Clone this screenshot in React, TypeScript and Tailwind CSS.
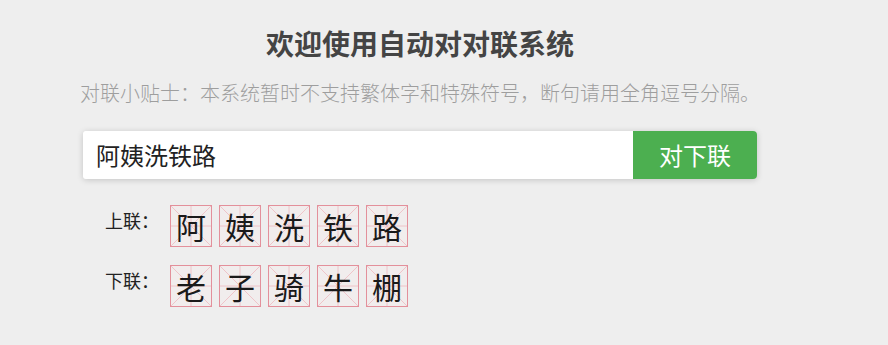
import React from "react";

const FONT = '"Noto Sans CJK SC", "Noto Sans", sans-serif';

function Cell({ ch }: { ch: string }) {
  return (
    <div className="relative flex h-[42px] w-[42px] items-center justify-center border border-[#e3909b] bg-[#f1eded]">
      <svg className="absolute inset-0 h-full w-full" viewBox="0 0 40 40" preserveAspectRatio="none">
        <line x1="0" y1="0" x2="40" y2="40" stroke="#eec0c5" strokeWidth="0.9" />
        <line x1="40" y1="0" x2="0" y2="40" stroke="#eec0c5" strokeWidth="0.9" />
        <line x1="20" y1="0" x2="20" y2="40" stroke="#eec0c5" strokeWidth="0.9" />
        <line x1="0" y1="20" x2="40" y2="20" stroke="#eec0c5" strokeWidth="0.9" />
      </svg>
      <span className="relative text-[30px] leading-none text-[#1a1a1a]">{ch}</span>
    </div>
  );
}

function Row({ label, text }: { label: string; text: string }) {
  return (
    <div className="flex items-start">
      <div className="ml-[22px] mt-[4px] w-[52px] whitespace-nowrap text-[18px] leading-[22px] text-[#222]">{label}</div>
      <div className="ml-[13px] flex gap-[7px]">
        {text.split("").map((c, i) => (
          <Cell key={i} ch={c} />
        ))}
      </div>
    </div>
  );
}

export default function App() {
  return (
    <div className="h-[345px] w-[888px] overflow-hidden bg-[#eeeeee]" style={{ fontFamily: FONT }}>
      <div className="ml-[83px] flex w-[674px] flex-col">
        <h1 className="pt-[23px] text-center text-[28px] font-bold leading-[40px] text-[#444]">
          欢迎使用自动对对联系统
        </h1>
        <p className="mt-[15px] -ml-[3px] whitespace-nowrap text-[20px] font-light leading-[30px] text-[#9e9e9e]">
          对联小贴士：本系统暂时不支持繁体字和特殊符号，断句请用全角逗号分隔。
        </p>
        <div className="mt-[23px] flex h-[48px] rounded-[4px] shadow-[0_1px_6px_rgba(0,0,0,0.18)]">
          <div className="flex flex-1 items-center rounded-l-[3px] bg-white pl-[13px] text-[24px] text-[#222]">
            阿姨洗铁路
          </div>
          <button className="flex w-[124px] items-center justify-center rounded-r-[4px] bg-[#4caf50] text-[24px] text-white">
            对下联
          </button>
        </div>
        <div className="mt-[26px] flex flex-col gap-[18px]">
          <Row label="上联：" text="阿姨洗铁路" />
          <Row label="下联：" text="老子骑牛棚" />
        </div>
      </div>
    </div>
  );
}
